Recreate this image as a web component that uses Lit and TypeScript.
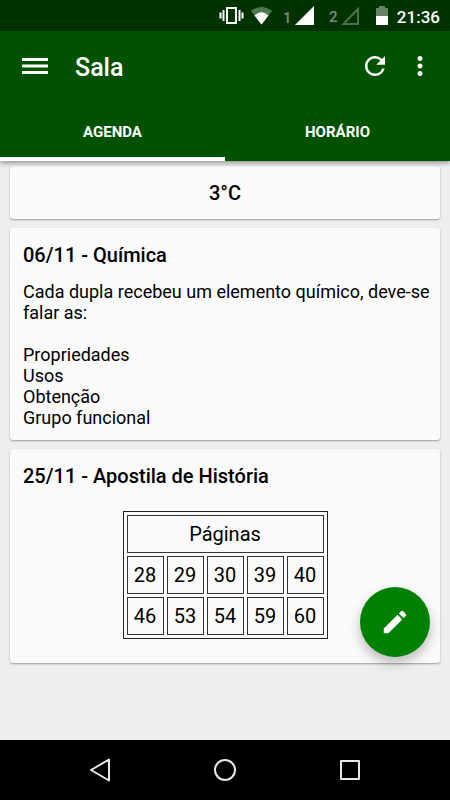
import { LitElement, html, css } from "lit";
import { customElement, state } from "lit/decorators.js";

@customElement("status-bar")
class StatusBar extends LitElement {
  static styles = css`
    :host {
      display: flex;
      justify-content: flex-end;
      align-items: center;
      height: 31px;
      padding: 0 10px;
      background: #003300;
      color: #fff;
      font: 500 17px/22px Roboto, sans-serif;
    }
    svg {
      display: block;
    }
    time {
      padding-top: 2px;
    }
    .sim {
      font-size: 15px;
      font-weight: 500;
      fill: #7f8a7f;
    }
  `;

  render() {
    return html`
      <svg width="180" height="31" viewBox="0 0 180 31" aria-hidden="true">
        <rect x="10" y="8" width="9" height="15" fill="none" stroke="#fff" stroke-width="2" />
        <path d="M6.500 10v11M3.500 12.500v6M22.500 10v11M25.500 12.500v6" stroke="#fff" stroke-width="2" />
        <path d="M34 11Q44.500 3 55 11L44.500 24.500Z" fill="#4d784d" />
        <path d="M37.500 15.500Q44.500 9 51.500 15.500L44.500 24.500Z" fill="#fff" />
        <text class="sim" x="66" y="23">1</text>
        <path d="M78 25L97 6V25Z" fill="#fff" />
        <text class="sim" x="112" y="22">2</text>
        <path d="M126.500 24L141 9V24Z" fill="none" stroke="#4d704d" stroke-width="2" />
        <path d="M159 8h3V6h6v2h3v9h-12Z" fill="#668566" />
        <path d="M159 16h12v9h-12Z" fill="#fff" />
      </svg>
      <time>21:36</time>
    `;
  }
}

@customElement("nav-bar")
class NavBar extends LitElement {
  static styles = css`
    :host {
      display: flex;
      justify-content: center;
      height: 60px;
      background: #000;
    }
    button {
      display: flex;
      align-items: center;
      justify-content: center;
      width: 125px;
      padding: 0;
      border: 0;
      background: none;
    }
    svg {
      fill: none;
      stroke: #e8e8e8;
      stroke-width: 2;
      stroke-linejoin: round;
    }
  `;

  render() {
    return html`
      <button aria-label="Voltar">
        <svg width="24" height="24"><path d="M3 12L21 1.500V22.500Z" /></svg>
      </button>
      <button aria-label="Início">
        <svg width="24" height="24"><circle cx="12" cy="12" r="10" /></svg>
      </button>
      <button aria-label="Recentes">
        <svg width="24" height="24"><rect x="3" y="3" width="18" height="18" /></svg>
      </button>
    `;
  }
}

@customElement("app-root")
class AppRoot extends LitElement {
  static styles = css`
    :host {
      display: flex;
      flex-direction: column;
      min-height: 100vh;
      background: #eee;
      color: #000;
      font-family: Roboto, sans-serif;
    }
    button {
      padding: 0;
      border: 0;
      background: none;
      color: inherit;
      font: inherit;
    }
    svg {
      display: block;
      fill: currentColor;
    }
    header {
      position: relative;
      background: #005200;
      color: #fff;
      box-shadow: 0 2px 5px rgba(0, 0, 0, 0.4);
    }
    .toolbar {
      display: flex;
      align-items: center;
      height: 70px;
      padding: 0 15px 0 20px;
    }
    .toolbar h1 {
      flex: 1;
      margin: 0 0 0 25px;
      padding-top: 4px;
      font-size: 25px;
      font-weight: 500;
      line-height: 30px;
    }
    .refresh {
      margin-right: 15px;
    }
    .tabs {
      display: flex;
      height: 60px;
    }
    .tab {
      flex: 1;
      padding-top: 6px;
      border-bottom: 4px solid transparent;
      font-size: 15px;
      font-weight: 700;
    }
    .tab[aria-selected="true"] {
      border-bottom-color: #fff;
    }
    main {
      flex: 1;
      display: flex;
      flex-direction: column;
      gap: 9px;
      padding: 5px 10px 20px;
    }
    .card {
      padding: 15px 13px 12px;
      border-radius: 3px;
      background: #fafafa;
      box-shadow: 0 1px 2px rgba(0, 0, 0, 0.35);
    }
    h2 {
      margin: 0;
      font-size: 20px;
      font-weight: 500;
      line-height: 24px;
    }
    .room {
      padding-bottom: 14px;
      text-align: center;
    }
    p {
      margin: 14px -8px 0 0;
      font-size: 18px;
      line-height: 21px;
      white-space: pre-line;
    }
    table {
      margin: 23px auto 12px;
      border: 1px solid #222;
      border-collapse: separate;
      border-spacing: 3px;
      font-size: 20px;
      line-height: 24px;
      text-align: center;
    }
    th,
    td {
      box-sizing: border-box;
      width: 37px;
      height: 38px;
      padding: 0;
      border: 1px solid #333;
      font-weight: 400;
    }
    .fab {
      position: fixed;
      right: 20px;
      bottom: 143px;
      display: grid;
      place-items: center;
      width: 70px;
      height: 70px;
      border-radius: 50%;
      background: #008000;
      color: #fff;
      box-shadow: 0 6px 12px rgba(0, 0, 0, 0.25);
    }
  `;

  @state() private tab = "Agenda";

  private pages = [
    [28, 29, 30, 39, 40],
    [46, 53, 54, 59, 60],
  ];

  private notes = `Cada dupla recebeu um elemento químico, deve-se falar as:

Propriedades
Usos
Obtenção
Grupo funcional`;

  render() {
    return html`
      <status-bar></status-bar>
      <header>
        <div class="toolbar">
          <button aria-label="Menu">
            <svg width="30" height="30"><path d="M2 7h26v3H2zM2 13.500h26v3H2zM2 20h26v3H2z" /></svg>
          </button>
          <h1>Sala</h1>
          <button class="refresh" aria-label="Atualizar">
            <svg width="30" height="30" viewBox="0 0 24 24">
              <path
                d="M17.650 6.350A7.958 7.958 0 0 0 12 4c-4.420 0-7.990 3.580-7.990 8s3.570 8 7.990 8c3.730 0 6.840-2.550 7.730-6h-2.080A5.990 5.990 0 0 1 12 18c-3.310 0-6-2.690-6-6s2.690-6 6-6c1.660 0 3.140.690 4.220 1.780L13 11h7V4l-2.350 2.350z"
              />
            </svg>
          </button>
          <button aria-label="Mais opções">
            <svg width="30" height="30" viewBox="0 0 24 24">
              <path
                d="M12 8c1.100 0 2-.9 2-2s-.9-2-2-2-2 .9-2 2 .9 2 2 2zm0 2c-1.100 0-2 .9-2 2s.9 2 2 2 2-.9 2-2-.9-2-2-2zm0 6c-1.100 0-2 .9-2 2s.9 2 2 2 2-.9 2-2-.9-2-2-2z"
              />
            </svg>
          </button>
        </div>
        <div class="tabs" role="tablist">
          ${["Agenda", "Horário"].map(
            (name) => html`<button
              class="tab"
              role="tab"
              aria-selected=${this.tab === name ? "true" : "false"}
              @click=${() => (this.tab = name)}
            >
              ${name.toUpperCase()}
            </button>`
          )}
        </div>
      </header>
      <main>
        <section class="card room"><h2>3°C</h2></section>
        <article class="card">
          <h2>06/11 - Química</h2>
          <p>${this.notes}</p>
        </article>
        <article class="card">
          <h2>25/11 - Apostila de História</h2>
          <table>
            <thead>
              <tr>
                <th colspan="5">Páginas</th>
              </tr>
            </thead>
            <tbody>
              ${this.pages.map((row) => html`<tr>${row.map((n) => html`<td>${n}</td>`)}</tr>`)}
            </tbody>
          </table>
        </article>
      </main>
      <button class="fab" aria-label="Editar">
        <svg width="30" height="30" viewBox="0 0 24 24">
          <path
            d="M3 17.250V21h3.750L17.810 9.940l-3.750-3.750L3 17.250zM20.710 7.040a1 1 0 0 0 0-1.410l-2.340-2.340a1 1 0 0 0-1.410 0l-1.830 1.830 3.750 3.750 1.830-1.830z"
          />
        </svg>
      </button>
      <nav-bar></nav-bar>
    `;
  }
}
